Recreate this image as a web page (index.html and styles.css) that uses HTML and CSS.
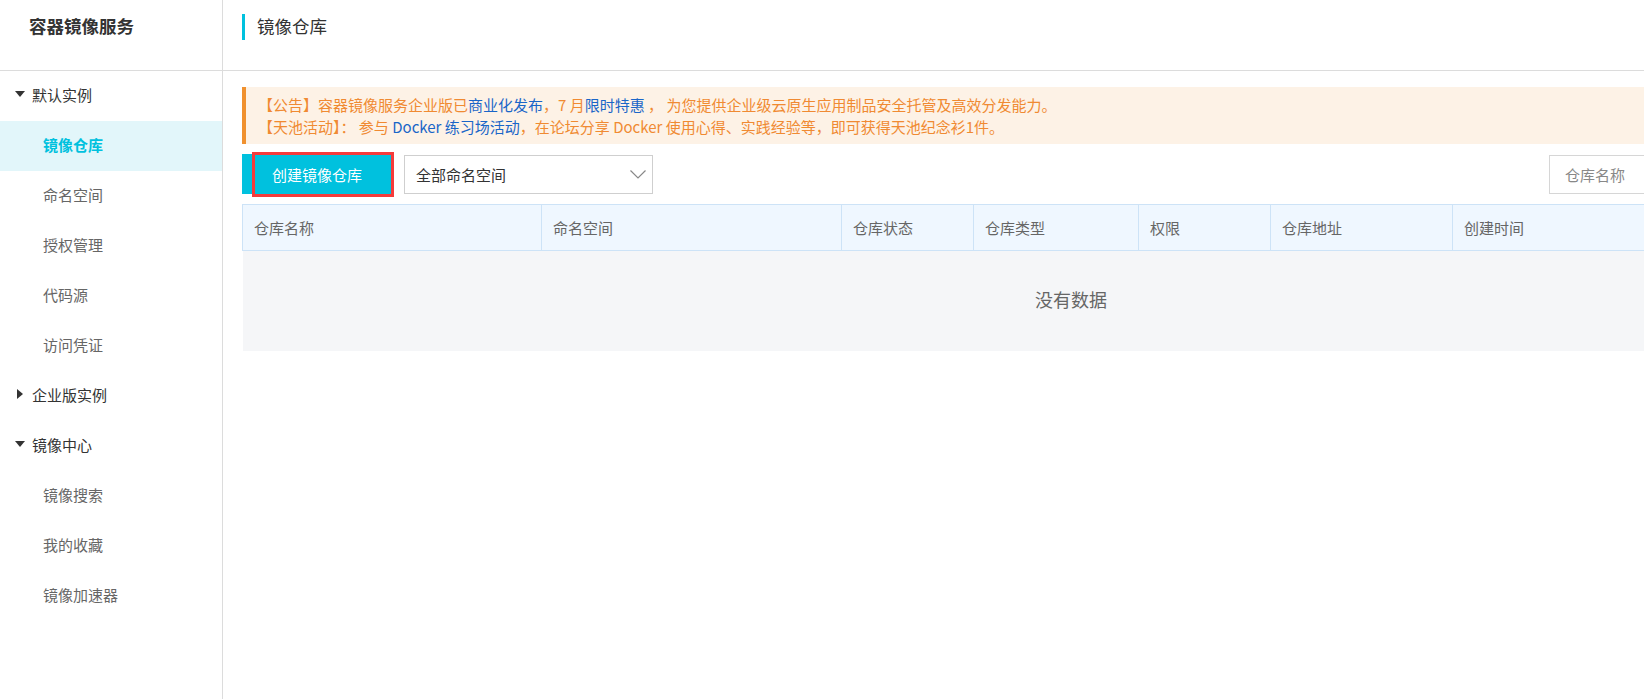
FILE: index.html
```html
<!DOCTYPE html>
<html lang="zh-CN">
<head>
<meta charset="utf-8">
<title>镜像仓库</title>
<link rel="stylesheet" href="styles.css">
</head>
<body>
<div class="app">
  <aside class="sidebar">
    <div class="brand">容器镜像服务</div>
    <ul class="menu">
      <li class="group"><span class="caret caret-down"></span>默认实例</li>
      <li class="item active">镜像仓库</li>
      <li class="item">命名空间</li>
      <li class="item">授权管理</li>
      <li class="item">代码源</li>
      <li class="item">访问凭证</li>
      <li class="group"><span class="caret caret-right"></span>企业版实例</li>
      <li class="group"><span class="caret caret-down"></span>镜像中心</li>
      <li class="item">镜像搜索</li>
      <li class="item">我的收藏</li>
      <li class="item">镜像加速器</li>
    </ul>
  </aside>
  <main class="main">
    <header class="page-head">
      <h1 class="page-title">镜像仓库</h1>
    </header>
    <div class="content">
      <div class="notice">
        <p>【公告】容器镜像服务企业版已<a class="link">商业化发布</a>，7 月<a class="link">限时特惠</a> ， 为您提供企业级云原生应用制品安全托管及高效分发能力。</p>
        <p>【天池活动】： 参与 <a class="link">Docker 练习场活动</a>，在论坛分享 Docker 使用心得、实践经验等，即可获得天池纪念衫1件。</p>
      </div>
      <div class="toolbar">
        <div class="create-wrap">
          <button class="btn-primary">创建镜像仓库</button>
          <span class="highlight"></span>
        </div>
        <div class="select">
          <span>全部命名空间</span>
          <svg class="chevron" width="16" height="9" viewBox="0 0 16 9"><path d="M0.5 0.5 L8 8 L15.5 0.5" fill="none" stroke="#888" stroke-width="1.2"/></svg>
        </div>
        <div class="spacer"></div>
        <div class="search">仓库名称</div>
      </div>
      <table class="grid">
        <colgroup>
          <col class="c1"><col class="c2"><col class="c3"><col class="c4"><col class="c5"><col class="c6"><col class="c7">
        </colgroup>
        <thead>
          <tr>
            <th>仓库名称</th>
            <th>命名空间</th>
            <th>仓库状态</th>
            <th>仓库类型</th>
            <th>权限</th>
            <th>仓库地址</th>
            <th>创建时间</th>
          </tr>
        </thead>
        <tbody>
          <tr><td class="empty" colspan="7">没有数据</td></tr>
        </tbody>
      </table>
    </div>
  </main>
</div>
</body>
</html>
```

FILE: styles.css
```css
html, body {
  margin: 0;
  padding: 0;
  overflow: hidden;
  background: #fff;
}
body {
  font-family: "Microsoft YaHei", "Noto Sans CJK SC", sans-serif;
  font-size: 15px;
  color: #333;
}
.app {
  display: flex;
  height: 699px;
}
.sidebar {
  width: 222px;
  flex: none;
  border-right: 1px solid #dcdcdc;
}
.brand {
  box-sizing: border-box;
  border-bottom: 1px solid #dcdcdc;
  height: 71px;
  padding: 14px 0 0 29px;
  font-size: 17.5px;
  line-height: 24px;
  font-weight: bold;
  color: #333;
}
.menu {
  list-style: none;
  margin: 0;
  padding: 0;
}
.menu li {
  height: 50px;
  box-sizing: border-box;
  padding-bottom: 4px;
  display: flex;
  align-items: center;
}
.group {
  color: #333;
  padding-left: 13px;
}
.caret {
  width: 19px;
  height: 10px;
  display: flex;
  align-items: center;
}
.caret-down::before {
  content: "";
  border-left: 5px solid transparent;
  border-right: 5px solid transparent;
  border-top: 6px solid #333;
  margin-left: 2px;
}
.caret-right::before {
  content: "";
  border-top: 5px solid transparent;
  border-bottom: 5px solid transparent;
  border-left: 6px solid #333;
  margin-left: 4px;
}
.item {
  padding-left: 43px;
  color: #666;
}
.item.active {
  background: #e2f6fa;
  color: #00c1de;
  font-weight: bold;
}
.main {
  flex: 1;
  min-width: 0;
  overflow: hidden;
}
.page-head {
  height: 71px;
  box-sizing: border-box;
  border-bottom: 1px solid #dcdcdc;
  padding: 14px 0 0 19px;
}
.page-title {
  margin: 0;
  font-size: 17.5px;
  font-weight: normal;
  line-height: 24px;
  color: #333;
  border-left: 3px solid #00c1de;
  padding: 0 0 2px 12px;
}
.content {
  width: 1658px;
  padding: 16px 0 0 19px;
}
.notice {
  background: #fdf2e6;
  border-left: 4px solid #f0912f;
  padding: 7px 0 6px 12px;
  color: #f08a32;
  font-size: 15px;
  line-height: 22px;
}
.notice p {
  margin: 0;
  white-space: nowrap;
}
.link {
  color: #1a66c8;
}
.toolbar {
  display: flex;
  align-items: center;
  margin-top: 10px;
  height: 40px;
}
.create-wrap {
  position: relative;
  height: 40px;
}
.btn-primary {
  width: 150px;
  height: 40px;
  border: none;
  background: #00c1de;
  color: #fff;
  font-family: inherit;
  font-size: 15px;
  padding: 0;
}
.highlight {
  position: absolute;
  left: 10px;
  top: -2px;
  width: 142px;
  height: 45px;
  box-sizing: border-box;
  border: 3px solid #f53b3b;
}
.select {
  margin-left: 12px;
  width: 249px;
  height: 39px;
  box-sizing: border-box;
  border: 1px solid #cfcfcf;
  display: flex;
  align-items: center;
  justify-content: space-between;
  padding: 0 6px 0 11px;
  color: #333;
}
.spacer {
  flex: 1;
}
.search {
  width: 351px;
  height: 39px;
  box-sizing: border-box;
  border: 1px solid #d6d6d6;
  display: flex;
  align-items: center;
  padding-left: 15px;
  color: #888;
}
.grid {
  margin-top: 10px;
  width: 1658px;
  table-layout: fixed;
  border-collapse: collapse;
}
.c1 { width: 299px; }
.c2 { width: 300px; }
.c3 { width: 132px; }
.c4 { width: 165px; }
.c5 { width: 132px; }
.c6 { width: 182px; }
.grid th {
  background: #eff7ff;
  border: 1px solid #cde3f7;
  height: 45px;
  padding: 0 0 0 11px;
  text-align: left;
  font-weight: normal;
  color: #666;
}
.grid td.empty {
  height: 100px;
  box-sizing: border-box;
  background: #f5f6f8;
  text-align: center;
  font-size: 18px;
  color: #666;
  padding: 0 0 4px;
}
```
